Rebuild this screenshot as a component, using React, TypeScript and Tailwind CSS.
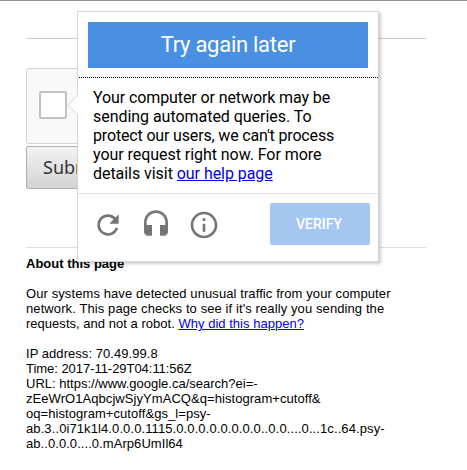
import React from 'react';

const tools = [
  {
    label: 'Get a new challenge',
    path: 'M17.65 6.35C16.2 4.9 14.21 4 12 4c-4.42 0-7.99 3.58-7.99 8s3.57 8 7.99 8c3.73 0 6.84-2.55 7.73-6h-2.08c-.82 2.33-3.04 4-5.65 4-3.31 0-6-2.69-6-6s2.69-6 6-6c1.66 0 3.14.69 4.22 1.78L13 11h7V4l-2.35 2.35z',
  },
  {
    label: 'Get an audio challenge',
    path: 'M12 1c-4.97 0-9 4.03-9 9v7c0 1.66 1.34 3 3 3h3v-8H5v-2c0-3.87 3.13-7 7-7s7 3.13 7 7v2h-4v8h3c1.66 0 3-1.34 3-3v-7c0-4.97-4.03-9-9-9z',
  },
  {
    label: 'Help',
    path: 'M11 17h2v-6h-2v6zm1-15C6.48 2 2 6.48 2 12s4.48 10 10 10 10-4.48 10-10S17.52 2 12 2zm0 18c-4.41 0-8-3.59-8-8s3.59-8 8-8 8 3.59 8 8-3.59 8-8 8zM11 9h2V7h-2v2z',
  },
];

const ChallengePopup: React.FC = () => (
  <div className="absolute left-[77px] top-[11px] w-[302px] h-[251px] bg-white border border-[#d6d6d6] shadow-[2px_2px_3px_rgba(0,0,0,0.2)] font-['Roboto',sans-serif] text-black">
    {/* Arrow pointing at the checkbox */}
    <svg className="absolute -left-[11px] top-[82px]" width="11" height="22" viewBox="0 0 11 22">
      <path d="M11 1L1 11l10 10z" fill="#fff" />
      <path d="M10.5 1.5L1 11l9.5 9.5" fill="none" stroke="#d6d6d6" />
    </svg>

    <div className="flex flex-col h-full">
      <div className="mx-[10px] mt-[10px] h-[46px] bg-[#4a90e2] text-white text-[22px] leading-[46px] text-center tracking-[-0.27px]">
        Try again later
      </div>
      <div className="mt-[9px] ml-px border-t border-dotted border-black" />
      <p className="mt-[10px] pl-[15px] pr-[30px] text-base leading-[19px]">
        <span className="tracking-[-0.1px]">Your computer or network may be</span><br />
        <span className="tracking-[-0.04px]">sending automated queries. To</span><br />
        <span className="tracking-[-0.16px]">protect our users, we can't process</span><br />
        <span className="tracking-[-0.05px]">your request right now. For more</span><br />
        <span className="tracking-[-0.05px]">details visit <a href="#" className="text-[#0000ee] underline">our help page</a></span>
      </p>
      <div className="mt-auto h-[68px] border-t border-[#dfdfdf] flex justify-between pl-[6px] pr-2">
        <div className="flex pt-[7px]">
          {tools.map((tool) => (
            <button key={tool.label} aria-label={tool.label} className="w-12 h-12 flex items-center justify-center">
              <svg width="32" height="32" viewBox="0 0 24 24" fill="#757575">
                <path d={tool.path} />
              </svg>
            </button>
          ))}
        </div>
        <button className="mt-[9px] w-[100px] h-[42px] rounded-[2px] bg-[#a4c6f1] text-white text-sm font-medium pr-[2px] pb-px">
          VERIFY
        </button>
      </div>
    </div>
  </div>
);

const App: React.FC = () => {
  return (
    <div className="relative h-[470px] overflow-hidden bg-white border-t border-[#909090] px-[26px] font-['Liberation_Sans',Arial,sans-serif] text-[13px] leading-[15px] text-black">
      <div className="w-[400px] pt-[37px]">
        <hr className="border-[#ccc]" />
        <div className="mt-[29px] w-[304px] h-[76px] rounded-[3px] border border-[#d3d3d3] bg-[#f9f9f9] pl-3 flex items-center">
          <div className="w-7 h-7 mb-[3px] mt-[1px] rounded-[2px] border-2 border-[#c1c1c1] bg-white" />
        </div>
        <button className="mt-[2px] block h-[43px] px-4 rounded-[2px] border border-[#adadad] bg-linear-to-b from-[#f2f2f2] to-[#d4d4d4] font-['Noto_Sans',sans-serif] text-[18px] text-[#333]">
          Submit
        </button>
        <hr className="mt-[58px] border-[#ddd]" />
        <div className="mt-[8px]">
          <b>About this page</b>
          <p className="mt-[15px] whitespace-nowrap">
            <span className="tracking-[0.095px]">Our systems have detected unusual traffic from your computer</span><br />
            <span className="tracking-[0.1px]">network. This page checks to see if it's really you sending the</span><br />
            <span className="tracking-[0.025px]">requests, and not a robot. <a href="#" className="text-[#0000ee] underline">Why did this happen?</a></span>
          </p>
          <p className="mt-[15px] whitespace-nowrap">
            <span className="tracking-[0.05px]">IP address: 70.49.99.8</span><br />
            <span className="tracking-[-0.04px]">Time: 2017-11-29T04:11:56Z</span><br />
            URL: https://www.google.ca/search?ei=-<br />
            <span className="tracking-[0.06px]">zEeWrO1AqbcjwSjyYmACQ&amp;q=histogram+cutoff&amp;</span><br />
            <span className="tracking-[0.06px]">oq=histogram+cutoff&amp;gs_l=psy-</span><br />
            <span className="tracking-[0.1px]">ab.3..0i71k1l4.0.0.0.1115.0.0.0.0.0.0.0.0..0.0....0...1c..64.psy-</span><br />
            <span className="tracking-[0.06px]">ab..0.0.0....0.mArp6UmIl64</span>
          </p>
        </div>
      </div>
      {/* offset by the page's top border */}
      <div className="absolute left-0 -top-px">
        <ChallengePopup />
      </div>
    </div>
  );
};

export default App;
